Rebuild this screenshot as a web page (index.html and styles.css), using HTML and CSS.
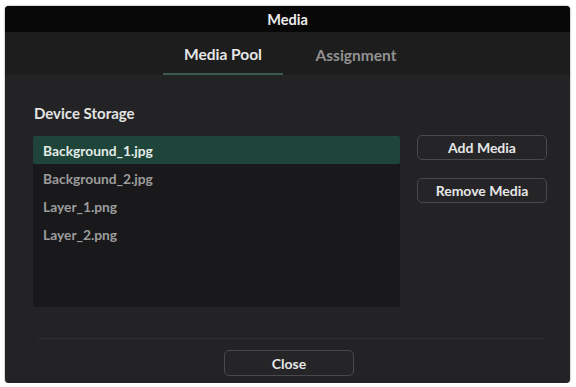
FILE: index.html
```html
<!DOCTYPE html>
<html>
<head>
<meta charset="utf-8">
<link rel="stylesheet" href="styles.css">
</head>
<body>
<div class="dialog">
  <div class="title">Media</div>
  <div class="tabs">
    <div class="tab active">Media Pool</div>
    <div class="tab">Assignment</div>
  </div>
  <div class="content">
    <div class="label">Device Storage</div>
    <div class="main">
      <div class="list">
        <div class="row selected">Background_1.jpg</div>
        <div class="row">Background_2.jpg</div>
        <div class="row">Layer_1.png</div>
        <div class="row">Layer_2.png</div>
      </div>
      <div class="actions">
        <button class="btn">Add Media</button>
        <button class="btn">Remove Media</button>
      </div>
    </div>
    <div class="sep"></div>
    <div class="footer">
      <button class="btn close">Close</button>
    </div>
  </div>
</div>
</body>
</html>
```
FILE: styles.css
```css
html, body {
  margin: 0;
  padding: 0;
  background: #ffffff;
}
body {
  font-family: Lato, "Noto Sans", sans-serif;
  font-weight: 700;
}
.dialog {
  margin: 6px 0 0 5px;
  width: 565px;
  height: 377px;
  background: #232325;
  border-radius: 4px;
  overflow: hidden;
  box-shadow: 0 0 2px rgba(0,0,0,0.5);
  display: flex;
  flex-direction: column;
}
.title {
  height: 26px;
  background: #080808;
  color: #ececec;
  font-size: 14.5px;
  display: flex;
  align-items: center;
  justify-content: center;
}
.tabs {
  height: 43px;
  background: #1d1d1e;
  display: flex;
  justify-content: center;
  align-items: flex-end;
  gap: 13px;
  padding-left: 4px;
}
.tab {
  width: 120px;
  height: 43px;
  box-sizing: border-box;
  display: flex;
  align-items: center;
  justify-content: center;
  padding-top: 2px;
  font-size: 15.5px;
  color: #929292;
}
.tab.active {
  color: #e6e6e6;
  border-bottom: 2px solid #3a5a50;
}
.content {
  flex: 1;
  display: flex;
  flex-direction: column;
  padding: 30px 23px 0 28px;
}
.label {
  color: #e4e4e4;
  font-size: 15px;
  line-height: 16px;
  margin-left: 1px;
}
.main {
  display: flex;
  margin-top: 15px;
  gap: 17px;
}
.list {
  width: 367px;
  height: 171px;
  background: #19191b;
  border-radius: 3px;
  display: flex;
  flex-direction: column;
}
.row {
  height: 28px;
  display: flex;
  align-items: center;
  padding-left: 10px;
  font-size: 13.8px;
  color: #9c9c9c;
}
.row.selected {
  background: #1f4439;
  color: #e2ece8;
  border-radius: 2px;
}
.actions {
  display: flex;
  flex-direction: column;
  gap: 18px;
  margin-top: -1px;
}
.btn {
  width: 130px;
  height: 25px;
  background: #252527;
  border: 1.5px solid #4a4a4c;
  border-radius: 5px;
  color: #e6e6e6;
  font-family: Lato, "Noto Sans", sans-serif;
  font-weight: 700;
  font-size: 14px;
  padding: 0;
}
.sep {
  margin: 31px 2px 0 5px;
  height: 1px;
  background: #303032;
}
.footer {
  display: flex;
  justify-content: center;
  margin-top: 11px;
  padding-right: 2px;
}
.btn.close {
  width: 130px;
  height: 26px;
}
```
